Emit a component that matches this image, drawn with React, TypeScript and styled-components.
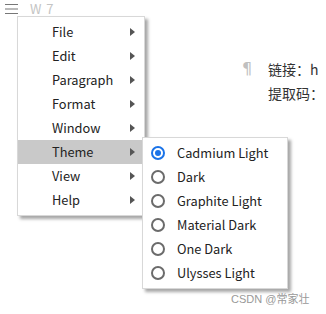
import styled, { createGlobalStyle } from "styled-components";

const Global = createGlobalStyle`
  html, body { margin: 0; padding: 0; background: #fff; }
  body { font-family: "Noto Sans CJK SC", "Noto Sans", sans-serif; }
`;

const Page = styled.div`
  position: relative;
  width: 326px;
  height: 314px;
  overflow: hidden;
  background: #fff;
`;

const TopBar = styled.div`
  display: flex;
  align-items: center;
  gap: 12px;
  height: 18px;
  padding: 0 0 0 5px;
`;

const Title = styled.span`
  font-size: 13px;
  line-height: 16px;
  color: #c4c4c4;
  letter-spacing: 1px;
`;

const Doc = styled.div`
  display: grid;
  grid-template-columns: 26px auto;
  row-gap: 4px;
  margin: 41px 0 0 242px;
  font-size: 14px;
  line-height: 20px;
  color: #333;
  white-space: nowrap;
`;

const Pilcrow = styled.span`
  color: #c0c0c0;
  font-size: 16px;
  font-family: "DejaVu Sans", sans-serif;
`;

const Watermark = styled.div`
  position: absolute;
  left: 231px;
  top: 290px;
  font-size: 11px;
  color: #999;
  font-family: "Liberation Sans", "Noto Sans CJK SC", sans-serif;
`;

const Menu = styled.div<{ $left: number; $top: number; $width: number }>`
  position: absolute;
  left: ${(p) => p.$left}px;
  top: ${(p) => p.$top}px;
  width: ${(p) => p.$width}px;
  box-sizing: border-box;
  padding: 3px 0;
  background: #fff;
  border: 1px solid #d8d8d8;
  box-shadow: 3px 3px 3px rgba(0, 0, 0, 0.35);
  z-index: 2;
`;

const Item = styled.div<{ $active?: boolean }>`
  position: relative;
  display: flex;
  align-items: center;
  box-sizing: border-box;
  height: 24px;
  padding: 0 9px 2px 34px;
  font-size: 12.8px;
  color: #222;
  background: ${(p) => (p.$active ? "#c9c9c9" : "transparent")};
`;

const Label = styled.span`
  flex: 1;
`;

const Arrow = styled.span`
  width: 0;
  height: 0;
  margin-top: 2px;
  border-top: 4px solid transparent;
  border-bottom: 4px solid transparent;
  border-left: 5px solid #555;
`;

const SubItem = styled.div`
  display: flex;
  align-items: center;
  gap: 12px;
  box-sizing: border-box;
  height: 24px;
  padding: 0 0 2px 8px;
  font-size: 12.8px;
  color: #222;
`;

const Radio = styled.span<{ $checked?: boolean }>`
  box-sizing: border-box;
  width: 14px;
  height: 14px;
  margin-top: 2px;
  border-radius: 50%;
  border: 2px solid ${(p) => (p.$checked ? "#1a73e8" : "#6b6b6b")};
  display: flex;
  align-items: center;
  justify-content: center;
  &::after {
    content: "";
    width: 6px;
    height: 6px;
    border-radius: 50%;
    background: ${(p) => (p.$checked ? "#1a73e8" : "transparent")};
  }
`;

const Hamburger = () => (
  <svg width="13" height="12" viewBox="0 0 13 12">
    <path d="M0 1.5h13M0 6h13M0 10.5h13" stroke="#777" strokeWidth="1.2" />
  </svg>
);

const items = ["File", "Edit", "Paragraph", "Format", "Window", "Theme", "View", "Help"];
const themes = ["Cadmium Light", "Dark", "Graphite Light", "Material Dark", "One Dark", "Ulysses Light"];

export default function App() {
  return (
    <Page>
      <Global />
      <TopBar>
        <Hamburger />
        <Title>W 7</Title>
      </TopBar>
      <Doc>
        <Pilcrow>¶</Pilcrow>
        <span>链接：h</span>
        <span />
        <span>提取码：</span>
      </Doc>
      <Menu $left={17} $top={16} $width={128}>
        {items.map((name) => (
          <Item key={name} $active={name === "Theme"}>
            <Label>{name}</Label>
            <Arrow />
          </Item>
        ))}
      </Menu>
      <Menu $left={142} $top={137} $width={146}>
        {themes.map((t, i) => (
          <SubItem key={t}>
            <Radio $checked={i === 0} />
            <span>{t}</span>
          </SubItem>
        ))}
      </Menu>
      <Watermark>CSDN @常家壮</Watermark>
    </Page>
  );
}
